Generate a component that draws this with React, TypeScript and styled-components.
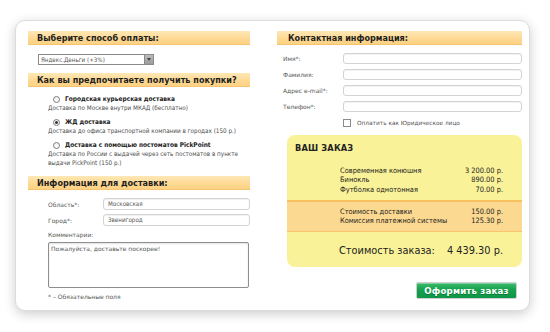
import React from 'react';
import styled, { createGlobalStyle } from 'styled-components';

const GlobalStyle = createGlobalStyle`
  html, body {
    margin: 0;
    padding: 0;
    background: #fff;
  }
  body {
    font-family: "DejaVu Sans", Verdana, sans-serif;
    color: #222;
  }
`;

const condensed = `"DejaVu Sans Condensed", "DejaVu Sans", sans-serif`;

const Page = styled.div`
  width: 550px;
  height: 332px;
  box-sizing: border-box;
  padding: 20px 20px 0 15px;
`;

const Card = styled.div`
  width: 515px;
  height: 291px;
  box-sizing: border-box;
  border: 1px solid #dcdcdc;
  border-radius: 10px;
  background: #fff;
  box-shadow: 0 3px 12px rgba(0, 0, 0, 0.2);
  padding: 10px 7px 0 12px;
  display: grid;
  grid-template-columns: 222px 245px;
  column-gap: 27px;
  align-items: start;
`;

const Column = styled.div`
  display: flex;
  flex-direction: column;
`;

const SectionHeader = styled.div<{ indent: number; mt?: number }>`
  height: 14px;
  box-sizing: border-box;
  margin-top: ${({ mt }) => mt || 0}px;
  padding-left: ${({ indent }) => indent}px;
  background: linear-gradient(#fee8b6, #fdd892 60%, #fcd283);
  border-bottom: 1px solid #f6c470;
  font-size: 8.1px;
  font-weight: bold;
  line-height: 14px;
  color: #1e1e1e;
  white-space: nowrap;
`;

const Select = styled.div`
  margin: 9px 0 0 10px;
  width: 116px;
  height: 11px;
  box-sizing: border-box;
  border: 1px solid #8a8a8a;
  display: flex;
  align-items: stretch;
  background: #fff;
`;

const SelectValue = styled.div`
  flex: 1;
  padding-left: 2px;
  font-family: ${condensed};
  font-size: 6.2px;
  line-height: 9px;
  color: #555;
  white-space: nowrap;
  overflow: hidden;
`;

const SelectArrow = styled.div`
  width: 8px;
  background: linear-gradient(#bdbdbd, #9c9c9c);
  border-left: 1px solid #888;
  display: flex;
  align-items: center;
  justify-content: center;
  &::after {
    content: '';
    border-left: 2.5px solid transparent;
    border-right: 2.5px solid transparent;
    border-top: 3px solid #444;
  }
`;

const OptionList = styled.div`
  margin-top: 7px;
  padding-left: 20px;
  display: flex;
  flex-direction: column;
  gap: 4.5px;
`;

const Option = styled.div`
  display: flex;
  flex-direction: column;
`;

const OptionTitle = styled.div`
  display: flex;
  align-items: center;
  gap: 5px;
  height: 10px;
  padding-left: 5px;
  font-family: ${condensed};
  font-size: 6.5px;
  font-weight: bold;
  color: #222;
  white-space: nowrap;
`;

const Radio = styled.span<{ checked?: boolean }>`
  width: 7px;
  height: 7px;
  box-sizing: border-box;
  border: 1px solid #7a7a7a;
  border-radius: 50%;
  background: linear-gradient(#f2f2f2, #fff);
  display: flex;
  align-items: center;
  justify-content: center;
  &::after {
    content: '';
    display: ${({ checked }) => (checked ? 'block' : 'none')};
    width: 3px;
    height: 3px;
    border-radius: 50%;
    background: #333;
  }
`;

const OptionDesc = styled.div`
  font-family: ${condensed};
  font-size: 6.3px;
  line-height: 8.5px;
  color: #4a4a4a;
  white-space: nowrap;
`;

const FieldList = styled.div<{ indent: number; mt: number; gap: number }>`
  margin-top: ${({ mt }) => mt}px;
  padding-left: ${({ indent }) => indent}px;
  display: flex;
  flex-direction: column;
  gap: ${({ gap }) => gap}px;
`;

const FieldRow = styled.div<{ labelWidth: number }>`
  display: grid;
  grid-template-columns: ${({ labelWidth }) => labelWidth}px 1fr;
  align-items: center;
`;

const Label = styled.div`
  font-size: 6px;
  color: #555;
  white-space: nowrap;
`;

const Input = styled.div<{ h: number }>`
  height: ${({ h }) => h}px;
  box-sizing: border-box;
  border: 1px solid #d3d3d3;
  border-radius: 3px;
  background: #fff;
  box-shadow: inset 0 1px 1px rgba(0, 0, 0, 0.06);
  padding-left: 4px;
  font-family: ${condensed};
  font-size: 6.2px;
  line-height: ${({ h }) => h - 2}px;
  color: #555;
`;

const CommentLabel = styled(Label)`
  margin-top: 4px;
  padding-left: 20px;
  line-height: 9px;
`;

const TextArea = styled.div`
  margin: 3px 1px 0 20px;
  height: 46px;
  box-sizing: border-box;
  border: 1px solid #8e8e8e;
  border-radius: 2px;
  box-shadow: inset 0 1px 2px rgba(0, 0, 0, 0.12);
  padding: 2px 2px;
  font-size: 6px;
  line-height: 8px;
  color: #555;
`;

const Note = styled(Label)`
  margin-top: 5px;
  padding-left: 20px;
  line-height: 8px;
`;

const CheckRow = styled.div`
  margin: 6px 0 0 66px;
  height: 9px;
  display: flex;
  align-items: center;
  gap: 6px;
`;

const Checkbox = styled.span`
  width: 8px;
  height: 8px;
  box-sizing: border-box;
  border: 1px solid #8a8a8a;
  background: #fff;
`;

const CheckLabel = styled(Label)`
  font-size: 5.8px;
`;

const OrderBox = styled.div`
  margin: 8px 0 0 10px;
  height: 132px;
  box-sizing: border-box;
  border-radius: 8px;
  background: #faf298;
  padding-top: 9px;
  display: flex;
  flex-direction: column;
  overflow: hidden;
`;

const OrderTitle = styled.div`
  padding-left: 8px;
  font-size: 8.2px;
  font-weight: bold;
  line-height: 9px;
  color: #222;
  letter-spacing: 0.2px;
`;

const Lines = styled.div<{ mt: number }>`
  margin-top: ${({ mt }) => mt}px;
  padding: 0 19px 0 53px;
`;

const Line = styled.div`
  display: flex;
  justify-content: space-between;
  font-family: ${condensed};
  font-size: 7.4px;
  line-height: 9.5px;
  color: #222;
  white-space: nowrap;
`;

const Band = styled.div`
  margin-top: 6px;
  background: #fbd990;
  border-top: 2px solid #f7c061;
  border-bottom: 1.5px solid #f7c470;
  padding: 4.5px 0 5px;
`;

const Total = styled.div`
  margin-top: 12px;
  padding: 0 19px 0 52px;
  display: flex;
  justify-content: space-between;
  font-size: 9.8px;
  line-height: 14px;
  color: #222;
  white-space: nowrap;
`;

const ButtonRow = styled.div`
  margin-top: 15px;
  display: flex;
  justify-content: flex-end;
  padding-right: 5px;
`;

const SubmitButton = styled.button`
  width: 101px;
  height: 17px;
  box-sizing: border-box;
  border: 1px solid #cfcfcf;
  border-radius: 2px;
  background: linear-gradient(#3dbb6c, #16a14f 45%, #0e9646);
  box-shadow: inset 0 1px 0 rgba(255, 255, 255, 0.35);
  color: #fff;
  font-family: "DejaVu Sans", Verdana, sans-serif;
  font-size: 8.6px;
  font-weight: bold;
  letter-spacing: 0.2px;
  text-shadow: 0 1px 0 rgba(0, 0, 0, 0.25);
  padding: 0;
  cursor: pointer;
`;

const deliveryOptions = [
  {
    title: 'Городская курьерская доставка',
    desc: ['Доставка по Москве внутри МКАД (бесплатно)'],
  },
  {
    title: 'ЖД доставка',
    desc: ['Доставка до офиса транспортной компании в городах (150 р.)'],
    checked: true,
  },
  {
    title: 'Доставка с помощью постоматов PickPoint',
    desc: [
      'Доставка по России с выдачей через сеть постоматов в пункте',
      'выдачи PickPoint (150 р.)',
    ],
  },
];

const contactFields = ['Имя*:', 'Фамилия:', 'Адрес e-mail*:', 'Телефон*:'];

const orderItems = [
  ['Современная конюшня', '3 200.00 р.'],
  ['Бинокль', '890.00 р.'],
  ['Футболка однотонная', '70.00 р.'],
];

const extraItems = [
  ['Стоимость доставки', '150.00 р.'],
  ['Комиссия платежной системы', '125.30 р.'],
];

const App = () => {
  return (
    <Page>
      <GlobalStyle />
      <Card>
        <Column>
          <SectionHeader indent={9}>Выберите способ оплаты:</SectionHeader>
          <Select>
            <SelectValue>Яндекс.Деньги (+3%)</SelectValue>
            <SelectArrow />
          </Select>

          <SectionHeader indent={9} mt={8}>Как вы предпочитаете получить покупки?</SectionHeader>
          <OptionList>
            {deliveryOptions.map((option) => (
              <Option key={option.title}>
                <OptionTitle>
                  <Radio checked={option.checked} />
                  {option.title}
                </OptionTitle>
                {option.desc.map((line) => (
                  <OptionDesc key={line}>{line}</OptionDesc>
                ))}
              </Option>
            ))}
          </OptionList>

          <SectionHeader indent={9} mt={9}>Информация для доставки:</SectionHeader>
          <FieldList indent={20} mt={8} gap={4}>
            <FieldRow labelWidth={55}>
              <Label>Область*:</Label>
              <Input h={12}>Московская</Input>
            </FieldRow>
            <FieldRow labelWidth={55}>
              <Label>Город*:</Label>
              <Input h={12}>Звенигород</Input>
            </FieldRow>
          </FieldList>
          <CommentLabel>Комментарии:</CommentLabel>
          <TextArea>Пожалуйста, доставьте поскорее!</TextArea>
          <Note>* – Обязательные поля</Note>
        </Column>

        <Column>
          <SectionHeader indent={11}>Контактная информация:</SectionHeader>
          <FieldList indent={6} mt={8} gap={5}>
            {contactFields.map((label) => (
              <FieldRow key={label} labelWidth={60}>
                <Label>{label}</Label>
                <Input h={11} />
              </FieldRow>
            ))}
          </FieldList>
          <CheckRow>
            <Checkbox />
            <CheckLabel>Оплатить как Юридическое лицо</CheckLabel>
          </CheckRow>

          <OrderBox>
            <OrderTitle>ВАШ ЗАКАЗ</OrderTitle>
            <Lines mt={12.5}>
              {orderItems.map(([name, price]) => (
                <Line key={name}>
                  <span>{name}</span>
                  <span>{price}</span>
                </Line>
              ))}
            </Lines>
            <Band>
              <Lines mt={0}>
                {extraItems.map(([name, price]) => (
                  <Line key={name}>
                    <span>{name}</span>
                    <span>{price}</span>
                  </Line>
                ))}
              </Lines>
            </Band>
            <Total>
              <span>Стоимость заказа:</span>
              <span>4 439.30 р.</span>
            </Total>
          </OrderBox>

          <ButtonRow>
            <SubmitButton>Оформить заказ</SubmitButton>
          </ButtonRow>
        </Column>
      </Card>
    </Page>
  );
};

export default App;
